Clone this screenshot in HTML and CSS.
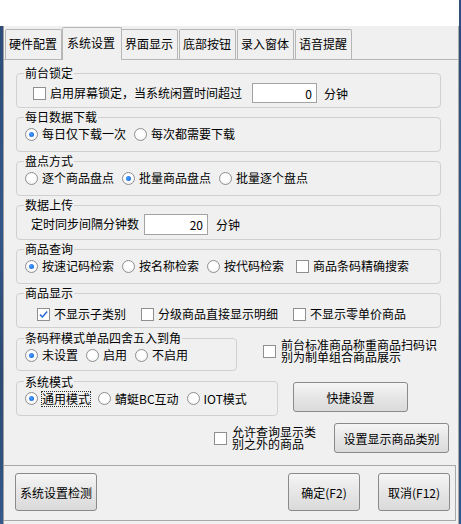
FILE: index.html
```html
<!DOCTYPE html>
<html lang="zh-CN">
<head>
<meta charset="utf-8">
<title>系统设置</title>
<link rel="stylesheet" href="styles.css">
</head>
<body>
<div class="screen">
  <div class="titlebar"></div>
  <div class="row">
    <div class="edge"></div>
    <div class="win">
      <div class="tabs">
        <div class="tab">硬件配置</div>
        <div class="tab tab-on">系统设置</div>
        <div class="tab">界面显示</div>
        <div class="tab">底部按钮</div>
        <div class="tab">录入窗体</div>
        <div class="tab">语音提醒</div>
      </div>
      <div class="tabpanel">
        <fieldset class="grp">
          <legend class="grp-title">前台锁定</legend>
          <div class="opts opts-p3 indent-8">
            <label class="opt"><span class="chk"></span><span class="txt">启用屏幕锁定，当系统闲置时间超过</span></label>
            <input class="num num-lock" value="0" readonly>
            <span class="unit">分钟</span>
          </div>
        </fieldset>
        <fieldset class="grp">
          <legend class="grp-title">每日数据下载</legend>
          <div class="opts">
            <label class="opt"><span class="radio on"></span><span class="txt">每日仅下载一次</span></label>
            <label class="opt"><span class="radio"></span><span class="txt">每次都需要下载</span></label>
          </div>
        </fieldset>
        <fieldset class="grp">
          <legend class="grp-title">盘点方式</legend>
          <div class="opts">
            <label class="opt"><span class="radio"></span><span class="txt">逐个商品盘点</span></label>
            <label class="opt"><span class="radio on"></span><span class="txt">批量商品盘点</span></label>
            <label class="opt"><span class="radio"></span><span class="txt">批量逐个盘点</span></label>
          </div>
        </fieldset>
        <fieldset class="grp">
          <legend class="grp-title">数据上传</legend>
          <div class="opts opts-p2 indent-6">
            <span class="txt">定时同步间隔分钟数</span>
            <input class="num num-sync" value="20" readonly>
            <span class="unit unit-sync">分钟</span>
          </div>
        </fieldset>
        <fieldset class="grp">
          <legend class="grp-title">商品查询</legend>
          <div class="opts">
            <label class="opt"><span class="radio on"></span><span class="txt">按速记码检索</span></label>
            <label class="opt"><span class="radio"></span><span class="txt">按名称检索</span></label>
            <label class="opt"><span class="radio"></span><span class="txt">按代码检索</span></label>
            <label class="opt opt-push"><span class="chk"></span><span class="txt">商品条码精确搜索</span></label>
          </div>
        </fieldset>
        <fieldset class="grp">
          <legend class="grp-title">商品显示</legend>
          <div class="opts opts-p4 opts-wide indent-12">
            <label class="opt"><span class="chk"><svg width="11" height="11" viewBox="0 0 11 11"><path d="M2 5.6 L4.4 8 L9.2 2.4" fill="none" stroke="#2a6ad8" stroke-width="1.5"/></svg></span><span class="txt">不显示子类别</span></label>
            <label class="opt"><span class="chk"></span><span class="txt">分级商品直接显示明细</span></label>
            <label class="opt"><span class="chk"></span><span class="txt">不显示零单价商品</span></label>
          </div>
        </fieldset>
        <div class="mixrow">
          <fieldset class="grp grp-scale">
            <legend class="grp-title">条码秤模式单品四舍五入到角</legend>
            <div class="opts">
              <label class="opt"><span class="radio on"></span><span class="txt">未设置</span></label>
              <label class="opt"><span class="radio"></span><span class="txt">启用</span></label>
              <label class="opt"><span class="radio"></span><span class="txt">不启用</span></label>
            </div>
          </fieldset>
          <label class="opt opt-multi opt-combo"><span class="chk"></span><span class="txt txt-multi txt-combo">前台标准商品称重商品扫码识别为制单组合商品展示</span></label>
        </div>
        <div class="mixrow">
          <fieldset class="grp grp-mode">
            <legend class="grp-title">系统模式</legend>
            <div class="opts">
              <label class="opt"><span class="radio on"></span><span class="txt focus">通用模式</span></label>
              <label class="opt"><span class="radio"></span><span class="txt">蜻蜓BC互动</span></label>
              <label class="opt"><span class="radio"></span><span class="txt">IOT模式</span></label>
            </div>
          </fieldset>
          <button class="btn btn-quick">快捷设置</button>
        </div>
        <div class="lastrow">
          <label class="opt opt-multi"><span class="chk"></span><span class="txt txt-multi txt-allow">允许查询显示类别之外的商品</span></label>
          <button class="btn btn-cat">设置显示商品类别</button>
        </div>
      </div>
      <div class="footer">
        <button class="btn btn-check">系统设置检测</button>
        <button class="btn btn-foot btn-ok">确定(F2)</button>
        <button class="btn btn-foot">取消(F12)</button>
      </div>
    </div>
    <div class="edge edge-r"></div>
  </div>
</div>
</body>
</html>
```

FILE: styles.css
```css
* {
  box-sizing: border-box;
}

html,
body {
  margin: 0;
  padding: 0;
}

body {
  width: 461px;
  height: 524px;
  overflow: hidden;
  background: #2e4f7b;
  font-family: "Noto Sans CJK SC", "Noto Sans", sans-serif;
  font-size: 12px;
  color: #000;
}

.screen {
  display: flex;
  flex-direction: column;
  height: 524px;
}

.titlebar {
  flex: none;
  width: 459px;
  height: 26px;
  background: #fff;
}

.row {
  flex: 1;
  display: flex;
  min-height: 0;
}

.edge {
  width: 3px;
  background: linear-gradient(#2c4d79, #33568a 40%, #2b4a74 70%, #34588a);
}

.edge-r {
  width: 2px;
}

.win {
  width: 456px;
  background: #f0f0f0;
  border-left: 1px solid #9d9d9d;
  border-right: 1px solid #a9a9a9;
  display: flex;
  flex-direction: column;
}

/* tabs */
.tabs {
  display: flex;
  align-items: flex-end;
  height: 33px;
  margin-top: 1px;
  margin-bottom: -1px;
  padding-left: 1px;
  position: relative;
  z-index: 1;
}

.tab {
  width: 57px;
  height: 30px;
  margin-right: 1px;
  margin-bottom: 1px;
  padding-left: 3px;
  border: 1px solid #b6b6b6;
  border-bottom: none;
  border-radius: 2px 2px 0 0;
  background: #f0f0f0;
  line-height: 28px;
  white-space: nowrap;
}

.tab-on {
  width: 60px;
  height: 33px;
  margin-left: -1px;
  margin-right: -1px;
  margin-bottom: 0;
  padding-left: 4px;
  line-height: 30px;
  background: #f0f0f0;
}

.tabpanel {
  height: 406px;
  border-top: 1px solid #b6b6b6;
  padding: 6px 0 0 12px;
  display: flex;
  flex-direction: column;
}

/* group boxes */
.grp {
  width: 425px;
  height: 42px;
  margin: 0 0 2px 0;
  padding: 0 8px;
  border: 1px solid #d0d0d0;
  border-radius: 4px;
  min-width: 0;
}

.grp-title {
  padding: 0 1px;
  margin-left: -1px;
  height: 14px;
  line-height: 14px;
  font-size: 12px;
}

.grp-scale {
  width: 221px;
  height: 40px;
  margin: 0;
}

.grp-mode {
  width: 262px;
  height: 41px;
  margin: 0;
}

.opts {
  display: flex;
  align-items: center;
  gap: 8px;
  height: 20px;
  white-space: nowrap;
}

.opts-p2 {
  margin-top: 2px;
}

.opts-p3 {
  margin-top: 3px;
}

.opts-p4 {
  margin-top: 4px;
}

.opts-wide {
  gap: 15px;
}

.indent-6 {
  padding-left: 6px;
}

.indent-8 {
  padding-left: 8px;
}

.indent-12 {
  padding-left: 12px;
}

.opt {
  display: flex;
  align-items: center;
  gap: 4px;
  line-height: 14px;
}

.opt-push {
  margin-left: 4px;
}

.txt {
  line-height: 14px;
}

.focus {
  outline: 1px dotted #333;
  outline-offset: 0;
}

.radio {
  flex: none;
  width: 13px;
  height: 13px;
  border-radius: 50%;
  border: 1px solid #8f8f8f;
  background: radial-gradient(circle at 50% 40%, #ffffff 40%, #ececec 100%);
  display: inline-flex;
  align-items: center;
  justify-content: center;
}

.radio.on::after {
  content: "";
  width: 5px;
  height: 5px;
  border-radius: 50%;
  background: radial-gradient(circle at 40% 40%, #4a9bff, #0d62d6);
}

.chk {
  flex: none;
  width: 13px;
  height: 13px;
  border: 1px solid #8f8f8f;
  background: #fff;
  display: inline-flex;
  align-items: center;
  justify-content: center;
}

.num {
  font: inherit;
  font-size: 12px;
  color: #000;
  background: #fff;
  border: 1px solid #a3a3a3;
  text-align: right;
  padding: 0 4px 0 0;
  margin: 0;
  outline: none;
}

.num-lock {
  width: 65px;
  height: 20px;
  margin-left: 2px;
}

.num-sync {
  width: 64px;
  height: 21px;
  margin-left: -3px;
}

.unit {
  margin-left: -1px;
}

.unit-sync {
  margin-left: 0;
}

/* rows with mixed content */
.mixrow {
  display: flex;
  align-items: center;
  height: 42px;
  margin-bottom: 2px;
}

.opt-multi {
  align-items: center;
  gap: 5px;
}

.txt-multi {
  line-height: 12px;
  white-space: normal;
}

.opt-combo {
  margin-left: 26px;
}

.txt-combo {
  width: 160px;
}

.txt-allow {
  width: 86px;
}

.lastrow {
  display: flex;
  align-items: center;
  margin-top: 5px;
  padding-left: 198px;
}

/* buttons */
.btn {
  font: inherit;
  font-size: 12px;
  color: #000;
  margin: 0;
  padding: 0;
  border: 1px solid #8a8a8a;
  border-radius: 3px;
  background: linear-gradient(#f5f5f5, #e6e6e6 50%, #dadada);
  cursor: default;
}

.btn-quick {
  width: 115px;
  height: 30px;
  margin-left: 15px;
  align-self: flex-start;
  margin-top: 8px;
}

.btn-cat {
  width: 115px;
  height: 30px;
  margin-left: 16px;
}

.footer {
  height: 56px;
  margin-right: 2px;
  border: 1px solid #a8a8a8;
  border-left: none;
  display: flex;
  align-items: flex-start;
  padding: 7px 5px 0 11px;
  gap: 18px;
}

.btn-check {
  width: 82px;
  height: 38px;
}

.btn-foot {
  width: 72px;
  height: 38px;
}

.btn-ok {
  margin-left: auto;
}
```
